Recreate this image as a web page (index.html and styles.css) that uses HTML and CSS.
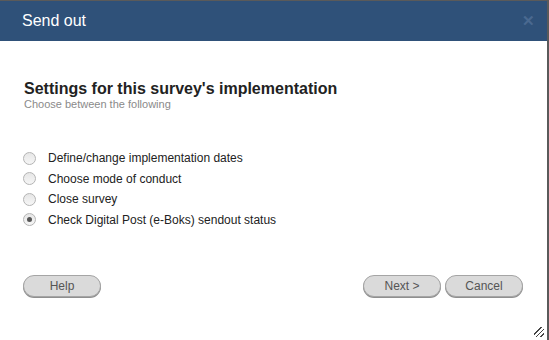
FILE: index.html
```html
<!DOCTYPE html>
<html lang="en">
<head>
    <meta charset="UTF-8">
    <title>Send out</title>
    <link rel="stylesheet" href="styles.css">
</head>
<body>
    <div class="dialog">
        <div class="dialog-header">
            <span class="dialog-title">Send out</span>
            <span class="close">&#x2715;</span>
        </div>
        <div class="dialog-body">
            <h2 class="heading">Settings for this survey's implementation</h2>
            <div class="subheading">Choose between the following</div>

            <ul class="options">
                <li class="option"><span class="radio"></span>Define/change implementation dates</li>
                <li class="option"><span class="radio"></span>Choose mode of conduct</li>
                <li class="option"><span class="radio"></span>Close survey</li>
                <li class="option"><span class="radio checked"></span>Check Digital Post (e-Boks) sendout status</li>
            </ul>

            <div class="buttons">
                <button class="btn">Help</button>
                <div class="btn-group">
                    <button class="btn">Next &gt;</button>
                    <button class="btn">Cancel</button>
                </div>
            </div>
        </div>
        <div class="grip"></div>
    </div>
</body>
</html>
```

FILE: styles.css
```css
body {
    margin: 0;
    height: 340px;
    background-color: #5a5a5a;
    font-family: 'Liberation Sans', Arial, sans-serif;
    overflow: hidden;
}

.dialog {
    position: relative;
    margin-top: 1px;
    width: 547px;
    height: 339px;
    background-color: #fff;
    display: flex;
    flex-direction: column;
}

.dialog-header {
    height: 40px;
    background-color: #2f5179;
    display: flex;
    align-items: center;
    justify-content: space-between;
    padding: 0 12px 0 22px;
}

.dialog-title {
    color: #fff;
    font-size: 16px;
}

.close {
    color: #4a6990;
    font-size: 15px;
    font-weight: bold;
}

.dialog-body {
    flex: 1;
    padding: 38px 24px 0 23px;
    display: flex;
    flex-direction: column;
}

.heading {
    margin: 0;
    font-size: 16px;
    font-weight: bold;
    color: #222;
    line-height: 19px;
    padding-left: 1px;
}

.subheading {
    font-size: 11px;
    color: #8a8a8a;
    line-height: 13px;
    padding-left: 1px;
}

.options {
    list-style: none;
    margin: 37px 0 0 0;
    padding: 0;
}

.option {
    display: flex;
    align-items: center;
    height: 20.5px;
    font-size: 12px;
    color: #222;
}

.radio {
    width: 11px;
    height: 11px;
    border-radius: 50%;
    border: 1px solid #b4b4b4;
    background: linear-gradient(#e6e6e6, #f6f6f6);
    margin-right: 12px;
    display: flex;
    align-items: center;
    justify-content: center;
}

.radio.checked::after {
    content: '';
    width: 5px;
    height: 5px;
    border-radius: 50%;
    background-color: #555;
}

.buttons {
    margin-top: 45px;
    display: flex;
    justify-content: space-between;
}

.btn-group {
    display: flex;
    gap: 4px;
}

.btn {
    width: 78px;
    height: 22px;
    border: 1px solid #a5a5a5;
    border-radius: 11px;
    background-color: #dadada;
    box-shadow: 0 1px 0 #8f8f8f;
    color: #555;
    font-family: 'Liberation Sans', Arial, sans-serif;
    font-size: 12px;
    padding: 0;
}

.grip {
    position: absolute;
    right: 3px;
    bottom: 3px;
    width: 10px;
    height: 10px;
    background: linear-gradient(135deg, transparent 35%, #444 35%, #444 41%, transparent 41%, transparent 58%, #444 58%, #444 64%, transparent 64%, transparent 80%, #444 80%, #444 86%, transparent 86%);
}
```
